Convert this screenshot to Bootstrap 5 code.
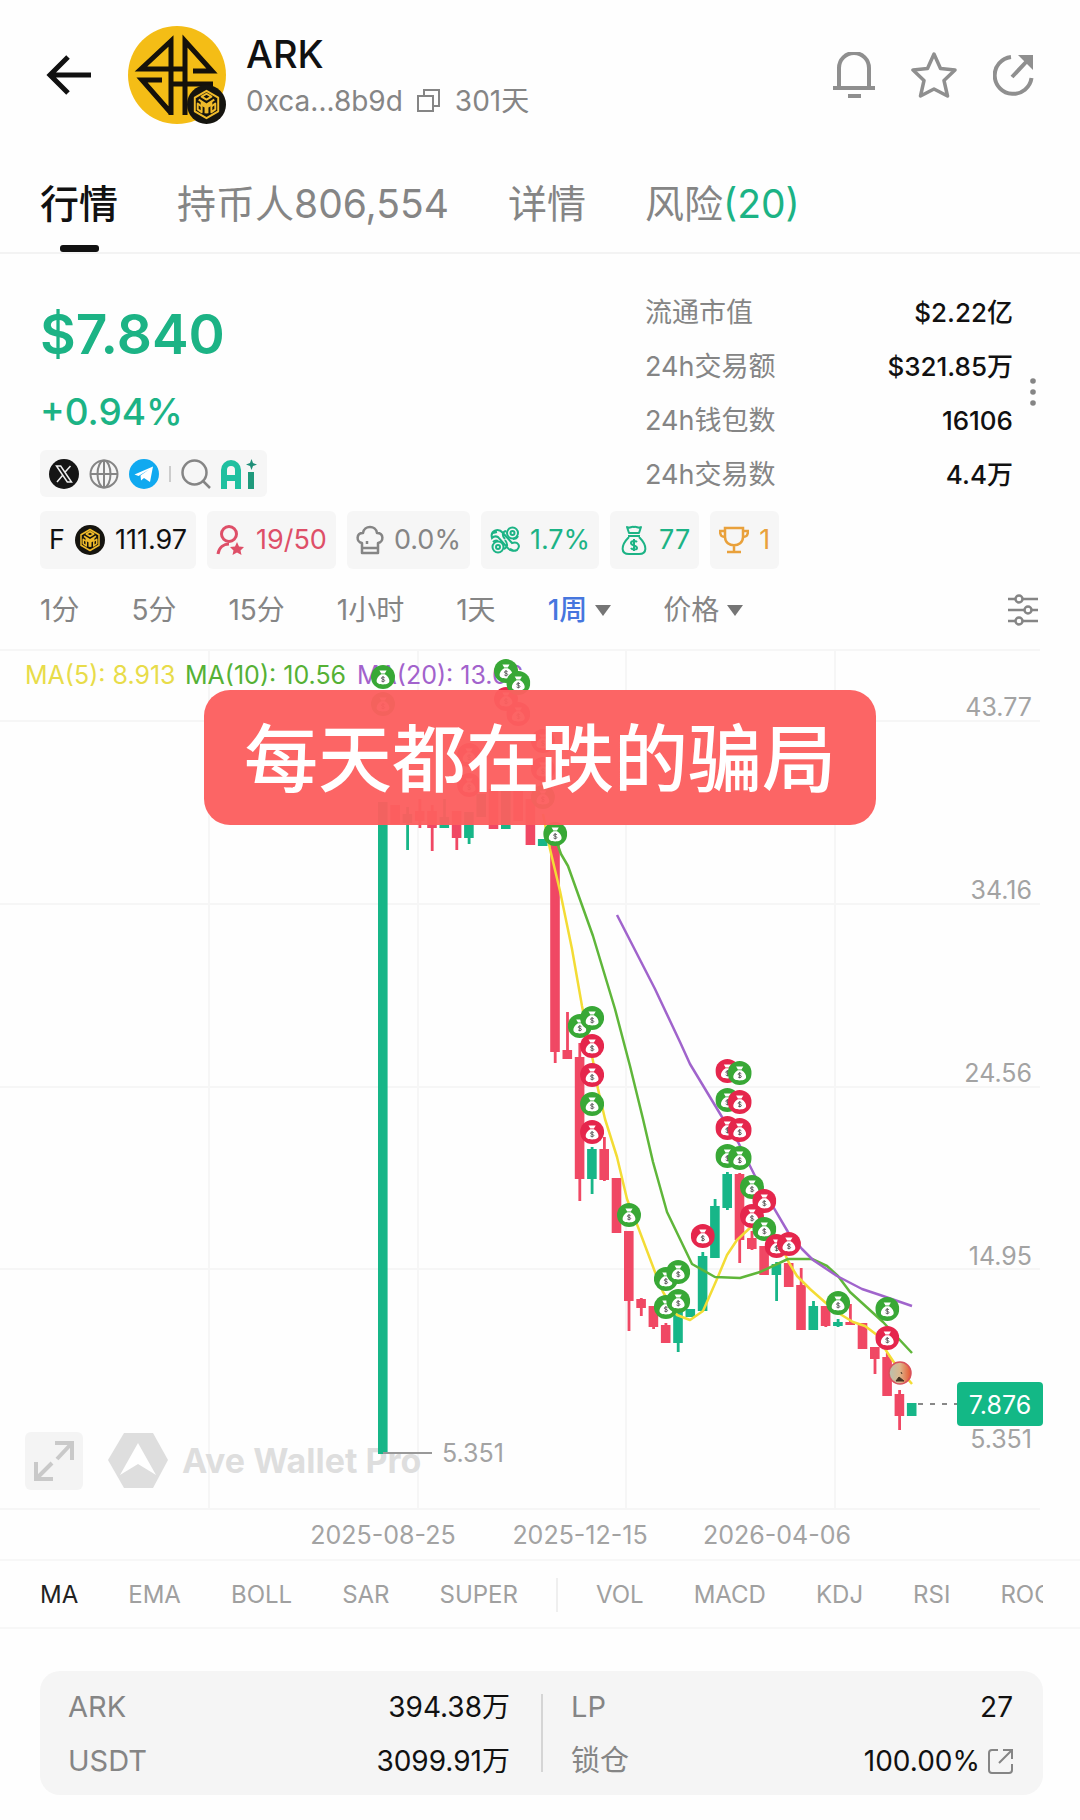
<!DOCTYPE html>
<html lang="zh-CN">
<head>
<meta charset="utf-8">
<meta name="viewport" content="width=device-width, initial-scale=1">
<title>ARK</title>
<link href="https://cdn.jsdelivr.net/npm/bootstrap@5.3.0/dist/css/bootstrap.min.css" rel="stylesheet">
<style>
  :root { --up: #1cb385; --ink: #111; --dim: #858585; --soft: #f6f6f6; --edge: 40px; }
  body { font-family: Inter, "Noto Sans CJK SC", sans-serif; background: #fefefe; color: var(--ink); font-size: 27px; line-height: 54px; }
  a { color: inherit; text-decoration: none; }
  svg { display: block; flex: none; }
  .ic { fill: none; stroke: currentColor; }
  .plain { border: 0; background: none; padding: 0; color: inherit; }
  .dim { color: var(--dim); }
  .up { color: var(--up); }
  .gutter { padding-left: var(--edge); padding-right: 37px; }

  .top-bar { padding-top: 26px; padding-bottom: 26px; padding-left: 46px; }
  .coin-logo { margin-left: 36px; }
  .coin-name { font-size: 38px; font-weight: 500; line-height: 48px; margin: 0; }
  .coin-meta { font-size: 28px; line-height: 50px; height: 46px; gap: 14px; }
  .coin-text { padding: 4px 0 0 18px; }
  .top-actions { gap: 36px; color: #8f8f8f; }

  .main-tabs { gap: 59px; border-bottom: 2px solid #f3f3f3; font-size: 39px; line-height: 48px; }
  .main-tabs a { padding-top: 30px; color: var(--dim); }
  .main-tabs a::after { content: ""; display: block; width: 39px; height: 7px; margin: 17px auto 0; border-radius: 3px; }
  .main-tabs a.active { color: var(--ink); font-weight: 500; }
  .main-tabs a.active::after { background: var(--ink); }

  .summary { padding-top: 32px; }
  .price { font-size: 55px; font-weight: 600; line-height: 70px; padding-top: 13px; }
  .change { font-size: 37px; font-weight: 500; line-height: 50px; margin-top: 18px; }
  .social { background: var(--soft); border-radius: 6px; height: 47px; padding: 0 10px 0 9px; margin-top: 13px; gap: 10px; }
  .stats { width: 368px; margin: 0; }
  .stats dt { font-weight: 400; color: var(--dim); }
  .stats dd { font-size: 26px; font-weight: 500; margin: 0; }
  .more { width: 30px; padding-left: 14px; padding-bottom: 4px; }

  .chips { gap: 11px; margin-top: 9px; }
  .chip { background: var(--soft); border-radius: 6px; height: 58px; padding: 0 9px; gap: 10px; white-space: nowrap; }
  .pink { color: #de4f68; }
  .gold { color: #e9a13b; }

  .frames { gap: 52px; font-size: 28px; line-height: 42px; height: 42px; margin-top: 20px; margin-bottom: 18px; color: var(--dim); }
  .frames .active { color: #4676de; font-weight: 500; }
  .caret { width: 0; border: 8px solid transparent; border-top: 11px solid #757575; border-bottom: 0; }

  .chart svg.plot { width: 100%; height: auto; font-size: 25px; }
  .axis { fill: #a3a3a3; }
  .banner { top: 41px; width: 672px; max-width: 90%; height: 135px; line-height: 139px; border-radius: 26px; background: #fc5f5ff5; color: #fff; font-size: 74px; font-weight: 500; white-space: nowrap; overflow: hidden; }
  .expand { left: 25px; bottom: 71px; width: 58px; height: 58px; border-radius: 6px; background: #f4f4f4; color: #c9c9c9; padding: 8px; }

  .indicators { margin-left: var(--edge); margin-right: 37px; gap: 50px; overflow: hidden; font-size: 24px; line-height: 68px; height: 68px; color: #a0a0a0; white-space: nowrap; }
  .indicators .active { color: #222; }
  .split { width: 2px; height: 34px; background: #efefef; margin: 0 -12px; flex: none; }
  .rule { border-top: 2px solid #f7f7f7; margin-top: -2px; }
  .pool { background: #f5f5f5; border-radius: 20px; margin: 42px 37px 24px var(--edge); padding: 9px 30px 7px 28px; font-size: 28px; }
  .pool .dim { font-size: 29px; }
  .pool .half { flex: 1 1 0; }
  .bar { width: 2px; background: #d5d5d5; margin: 14px 28px 16px 31px; }
</style>
</head>
<body>

<svg width="0" height="0" class="position-absolute" aria-hidden="true">
  <symbol id="bnb" viewBox="0 0 40 40">
    <circle cx="20" cy="20" r="20" fill="#15140f"/>
    <path d="M20 6l12 7v14l-12 7-12-7V13zM12 15l8 5 8-5M20 20v9M15 12l5-3 5 3-5 3zM11 19v6l4 3v-6zM29 19v6l-4 3v-6z" fill="none" stroke="#f0bb2a" stroke-width="2" stroke-linejoin="round"/>
    <path d="M14 16l6 4 6-4v5l-4 2v6h-4v-6l-4-2z" fill="#f0bb2a"/>
  </symbol>
  <symbol id="bag" viewBox="-12 -12 24 24">
    <circle r="12" fill="currentColor"/>
    <path d="M-3.6-6.6h7.2l-1.8 3h-3.6zM-1.8-2.8h3.6C5-1 6.4 1.6 6.4 3.8 6.4 6.6 4 7.4 0 7.4S-6.400 6.6-6.400 3.800C-6.400 1.600-5-1-1.800-2.800z" fill="#fff"/>
    <path d="M1.700.8C.8-.2-1.600-.2-1.600 1.200c0 1.500 3.300.7 3.300 2.300 0 1.400-2.500 1.500-3.400.4M0-.9v6.200" fill="none" stroke="#555" stroke-width=".9"/>
  </symbol>
</svg>

<header class="top-bar gutter d-flex align-items-start">
  <button class="plain align-self-center" aria-label="返回">
    <svg class="ic" width="46" height="40" viewBox="0 0 46 40" stroke-width="5"><path d="M45 20H5M22 2L4 20l18 18"/></svg>
  </button>
  <svg class="coin-logo" width="100" height="98" viewBox="0 0 100 98">
    <circle cx="49" cy="49" r="49" fill="#f4bd16"/>
    <g fill="none" stroke="#15110a" stroke-width="5">
      <path d="M43 89V15L13 43h44M57 89V15l27 30H65M34 54H14l29 33M43 58h42"/>
    </g>
    <use href="#bnb" x="59" y="59" width="39" height="39"/>
  </svg>
  <div class="coin-text">
    <h1 class="coin-name">ARK</h1>
    <div class="coin-meta dim d-flex align-items-center">
      <span>0xca...8b9d</span>
      <svg class="ic" width="24" height="24" viewBox="0 0 24 24" stroke-width="2"><path d="M1 7h15v15H1zM7 6V1h15v16h-5"/></svg>
      <span>301天</span>
    </div>
  </div>
  <div class="top-actions d-flex align-items-center align-self-center ms-auto pe-2">
    <button class="plain" aria-label="提醒"><svg class="ic" width="42" height="46" viewBox="0 0 42 46" stroke-width="4"><path d="M6 36V16a15 15 0 0 1 30 0v20M0 36h42M15 44h13"/></svg></button>
    <button class="plain" aria-label="收藏"><svg class="ic" width="46" height="46" viewBox="0 0 46 46" stroke-width="3.500" stroke-linejoin="round"><path d="M23 2l6.500 14.500L44 18 33 28.500 36.500 44 23 37 9.500 44 13 28.500 2 18l14.500-1.500z"/></svg></button>
    <button class="plain" aria-label="分享"><svg class="ic" width="42" height="42" viewBox="0 0 42 42" stroke-width="4"><path d="M18 3a18.500 18.500 0 1 0 20.500 21M19 23L35 6"/><path d="M25 1h15v15z" fill="currentColor" stroke="none"/></svg></button>
  </div>
</header>

<nav class="main-tabs gutter d-flex">
  <a href="#" class="active">行情</a>
  <a href="#">持币人806,554</a>
  <a href="#">详情</a>
  <a href="#">风险<span class="up">(20)</span></a>
</nav>

<main>
  <section class="summary gutter d-flex justify-content-between">
    <div class="d-flex flex-column align-items-start">
      <div class="price up">$7.840</div>
      <div class="change up">+0.94%</div>
      <div class="social d-flex align-items-center dim">
        <a href="#" aria-label="X"><svg width="30" height="30" viewBox="0 0 30 30"><circle cx="15" cy="15" r="15" fill="#151515"/><path d="M7.500 7h4.200L22.500 23h-4.200zM21.500 7l-6 6.700M13.700 16.300L8 23" fill="none" stroke="#eee" stroke-width="1.500"/></svg></a>
        <a href="#" aria-label="网站"><svg class="ic" width="30" height="30" viewBox="0 0 30 30" stroke-width="2"><circle cx="15" cy="15" r="13.500"/><ellipse cx="15" cy="15" rx="6.500" ry="13.500"/><path d="M1.500 15h27M15 1.500v27"/></svg></a>
        <a href="#" aria-label="Telegram"><svg width="30" height="30" viewBox="0 0 30 30"><circle cx="15" cy="15" r="15" fill="#10a9f0"/><path d="M5.500 15.500L24 7.500l-3 15.500-6-4-3 2.500-.500-5L20 10.500 9.500 17z" fill="#fff"/></svg></a>
        <svg width="2" height="16"><path d="M1 0v16" stroke="#ccc" stroke-width="2"/></svg>
        <a href="#" aria-label="搜索"><svg class="ic" width="30" height="30" viewBox="0 0 30 30" stroke-width="2.500"><circle cx="13.500" cy="13.500" r="12"/><path d="M22 22l7 7"/></svg></a>
        <a href="#" aria-label="Ai"><svg width="36" height="30" viewBox="0 0 36 30"><g fill="none" stroke="#1fc0a0" stroke-width="6"><path d="M3 30V11a7 7 0 0 1 14 0v19M3 19h14"/><path d="M30 13v17" stroke="#1f9a7c"/></g><path d="M30.500 0l1.500 4 4 1.500-4 1.500-1.500 4-1.500-4-4-1.500 4-1.500z" fill="#1f8f78"/></svg></a>
      </div>
    </div>
    <div class="d-flex">
      <dl class="stats">
        <div class="d-flex justify-content-between"><dt>流通市值</dt><dd>$2.22亿</dd></div>
        <div class="d-flex justify-content-between"><dt>24h交易额</dt><dd>$321.85万</dd></div>
        <div class="d-flex justify-content-between"><dt>24h钱包数</dt><dd>16106</dd></div>
        <div class="d-flex justify-content-between"><dt>24h交易数</dt><dd>4.4万</dd></div>
      </dl>
      <button class="plain more dim" aria-label="更多"><svg width="12" height="28" viewBox="0 0 12 28" fill="currentColor"><circle cx="6" cy="3" r="2.800"/><circle cx="6" cy="14" r="2.800"/><circle cx="6" cy="25" r="2.800"/></svg></button>
    </div>
  </section>

  <section class="chips gutter d-flex">
    <div class="chip d-flex align-items-center"><span>F</span><svg width="30" height="30"><use href="#bnb" width="30" height="30"/></svg><span>111.97</span></div>
    <div class="chip pink d-flex align-items-center"><svg class="ic" width="30" height="30" viewBox="0 0 30 30" stroke-width="3"><circle cx="13" cy="9" r="7.500"/><path d="M2 29c1-7 6-10 11-10"/><path d="M21 17l2 4.500 5 .500-3.500 3.500 1 4.500-4.500-2.500-4.500 2.500 1-4.500L14 22l5-.500z" fill="currentColor" stroke="none"/></svg><span>19/50</span></div>
    <div class="chip dim d-flex align-items-center"><svg class="ic" width="28" height="30" viewBox="0 0 28 30" stroke-width="2.500" stroke-linejoin="round"><path d="M6 18C0 17 0 8 7 8c1-8 13-8 14 0 7 0 7 9 1 10v10H6zM6 23h16M11 16v3"/></svg><span>0.0%</span></div>
    <div class="chip up d-flex align-items-center"><svg class="ic" width="30" height="30" viewBox="0 0 30 30" stroke-width="2"><circle cx="22.500" cy="8" r="5.500"/><circle cx="22.500" cy="8" r="2"/><circle cx="8" cy="22" r="5.500"/><circle cx="8" cy="22" r="2"/><path d="M2 13C0 6 8 2 13 8l9 10c6-2 9 3 5 7-4 2-8 0-10-3L8 12c-2-1-4-1-6 1zM16 6c-4 1-4 5-1 8M14 24c4-2 4-5 1-9M3 8l4-1M24 26l-4-2M3 17c1-1 3-2 5-1M23 14c2 0 4-1 5-3"/></svg><span>1.7%</span></div>
    <div class="chip up d-flex align-items-center"><svg class="ic" width="30" height="30" viewBox="0 0 30 30" stroke-width="2" stroke-linejoin="round"><path d="M10 8L8 2c3 2 4-1 7 0 3-1 4 2 7 0l-2 6zM9 11h12M10 12c-9 9-8 17 0 17h10c8 0 9-8 0-17M18 17c-2-2-6-1-6 1 0 3 6 2 6 5 0 2-5 2-6 0M15 14v12"/></svg><span>77</span></div>
    <div class="chip gold d-flex align-items-center"><svg class="ic" width="30" height="28" viewBox="0 0 30 28" stroke-width="2.500"><path d="M6 2h18v9c0 11-18 11-18 0zM15 19v7M8 26h14M6 5H1c0 5 2 6 5 6M24 5h5c0 5-2 6-5 6"/></svg><span>1</span></div>
  </section>

  <nav class="frames gutter d-flex align-items-center">
    <button class="plain">1分</button>
    <button class="plain">5分</button>
    <button class="plain">15分</button>
    <button class="plain">1小时</button>
    <button class="plain">1天</button>
    <button class="plain active d-flex align-items-center gap-2">1周<span class="caret"></span></button>
    <button class="plain d-flex align-items-center gap-2">价格<span class="caret"></span></button>
    <button class="plain ms-auto" aria-label="设置"><svg class="ic" width="36" height="32" viewBox="0 0 36 32" stroke-width="2.500"><path d="M1 5h8M16 5h15M1 16h17M25 16h6M1 27h8M16 27h15"/><circle cx="12" cy="5" r="3.500"/><circle cx="21" cy="16" r="3.500"/><circle cx="12" cy="27" r="3.500"/></svg></button>
  </nav>

  <section class="chart position-relative">
    <svg class="plot" viewBox="0 650 1080 912" role="img" aria-label="ARK 周线">
      <path d="M0 651h1040M0 722h1040M0 905h1040M0 1088h1040M0 1270h1040M0 1510h1040M209 651v859M418 651v859M626 651v859M835 651v859" stroke="#f6f6f6" stroke-width="2" fill="none"/>
      <g fill="#dedede">
        <path d="M124 1434h29l15 27-15 28h-29l-16-28z"/>
        <path d="M138 1444l18 32-18-11-18 11z" fill="#fff"/>
        <text x="182" y="1474" font-size="34" font-weight="700">Ave Wallet Pro</text>
      </g>
      <text x="25" y="685" fill="#e8dc4a">MA(5): 8.913</text>
      <text x="185" y="685" fill="#55b135">MA(10): 10.56</text>
      <text x="357" y="685" fill="#a262cc">MA(20): 13.06</text>
      <g id="candles"></g>
      <path d="M383 1454h49" stroke="#999" stroke-width="2"/>
      <text class="axis" x="442" y="1463">5.351</text>
      <g fill="none" stroke-width="2.500" stroke-linejoin="round">
        <path stroke="#f3dc35" d="M543 815L550 850 560 892 572 950 582 1007 593 1062 598 1090 605 1120 617 1158 627 1200 638 1228 655 1273 663 1293 677 1316 690 1321 703 1312 717 1280 727 1256 737 1241 752 1227 777 1237 788 1262 797 1277 810 1290 827 1305 840 1315 853 1323 865 1327 877 1336 887 1353 893 1362 912 1385"/>
        <path stroke="#5fb63a" d="M552 830L561 855 568 867 593 937 615 1010 630 1067 643 1120 653 1163 667 1213 692 1265 715 1278 740 1279 760 1273 788 1260 812 1260 827 1267 838 1277 850 1293 883 1323 912 1354"/>
        <path stroke="#a064cc" d="M617 916L655 990 680 1043 690 1065 722 1118 738 1143 755 1177 788 1233 802 1250 813 1261 837 1277 862 1290 880 1296 912 1307"/>
      </g>
      <path d="M918 1405h40" stroke="#888" stroke-width="2" stroke-dasharray="5 7"/>
      <g id="markers"></g>
      <defs><linearGradient id="face"><stop offset="0" stop-color="#b9c0ae"/><stop offset=".5" stop-color="#dcb68c"/><stop offset="1" stop-color="#e8552f"/></linearGradient></defs>
      <circle cx="900" cy="1374" r="11" fill="url(#face)" stroke="#d9515c" stroke-width="1.500"/>
      <path d="M896 1382l3-4 5 4zM901 1373l1 2" stroke="#432" fill="#432"/>
      <g class="axis" text-anchor="end">
        <text x="1032" y="717">43.77</text>
        <text x="1032" y="900">34.16</text>
        <text x="1032" y="1083">24.56</text>
        <text x="1032" y="1266">14.95</text>
        <text x="1032" y="1449">5.351</text>
      </g>
      <rect x="957" y="1383" width="86" height="44" rx="4" fill="#13b886"/>
      <text x="1000" y="1415" text-anchor="middle" fill="#fff">7.876</text>
      <g class="axis" text-anchor="middle">
        <text x="383" y="1545">2025-08-25</text>
        <text x="580" y="1545">2025-12-15</text>
        <text x="777" y="1545">2026-04-06</text>
      </g>
    </svg>
    <div class="banner position-absolute start-50 translate-middle-x text-center">每天都在跌的骗局</div>
    <button class="plain expand position-absolute" aria-label="全屏"><svg class="ic" width="42" height="42" viewBox="0 0 42 42" stroke-width="4"><path d="M22 3h17v17M39 3L24 19M3 22v17h17M3 39l16-16"/></svg></button>
  </section>

  <div class="rule"></div>
  <nav class="indicators d-flex align-items-center">
    <a href="#" class="active">MA</a><a href="#">EMA</a><a href="#">BOLL</a><a href="#">SAR</a><a href="#">SUPER</a>
    <span class="split"></span>
    <a href="#">VOL</a><a href="#">MACD</a><a href="#">KDJ</a><a href="#">RSI</a><a href="#">ROC</a>
  </nav>
  <div class="rule"></div>

  <section class="pool d-flex">
    <div class="half">
      <div class="d-flex justify-content-between"><span class="dim">ARK</span><span>394.38万</span></div>
      <div class="d-flex justify-content-between"><span class="dim">USDT</span><span>3099.91万</span></div>
    </div>
    <div class="bar"></div>
    <div class="half">
      <div class="d-flex justify-content-between"><span class="dim">LP</span><span>27</span></div>
      <div class="d-flex justify-content-between"><span class="dim">锁仓</span><a href="#" class="d-flex align-items-center gap-2">100.00%<svg class="ic dim" width="25" height="25" viewBox="0 0 25 25" stroke-width="2"><path d="M10 1H4a3 3 0 0 0-3 3v17a3 3 0 0 0 3 3h17a3 3 0 0 0 3-3v-6M11 14L24 1M15 1h9v9"/></svg></a></div>
    </div>
  </section>
</main>

<script src="https://cdn.jsdelivr.net/npm/bootstrap@5.3.0/dist/js/bootstrap.bundle.min.js"></script>
<script>
  const NS = "http://www.w3.org/2000/svg";
  const add = (parent, tag, attrs) => {
    const el = document.createElementNS(NS, tag);
    for (const k in attrs) el.setAttribute(k, attrs[k]);
    parent.appendChild(el);
  };
  // weekly candles: direction, body top, body bottom, high, low
  const weeks = [
    ["u",803,1455],["d",806,825],["u",815,824,808,851],["d",812,822,800,829],["d",812,829,806,852],["u",818,829,800,829],
    ["d",812,839,812,851],["u",813,839,813,845],["u",795,818],["d",790,830],["u",785,830],["d",790,822],["d",800,846],
    ["u",840,847],["d",840,1053,840,1064],["d",1051,1060,1013,1060],["d",1058,1180,1044,1202],["u",1150,1180,1148,1195],
    ["d",1150,1181,1138,1182],["d",1179,1234],["d",1232,1302,1232,1332],["d",1300,1309,1299,1317],["d",1307,1328,1307,1330],
    ["d",1326,1344,1324,1344],["u",1312,1344,1312,1353],["u",1310,1318],["u",1257,1312,1253,1312],["u",1207,1259,1200,1259],
    ["u",1175,1209,1173,1211],["d",1175,1241,1174,1264],["d",1239,1250,1232,1251],["d",1247,1276],["u",1265,1276,1263,1302],
    ["d",1264,1288],["d",1286,1331,1269,1331],["u",1307,1331,1302,1331],["d",1307,1327,1307,1328],["u",1323,1327,1320,1328],
    ["d",1323,1326,1305,1326],["d",1324,1350],["d",1348,1360,1348,1375],["d",1358,1397,1354,1397],["d",1395,1417,1391,1431],["u",1404,1417]
  ];
  const candles = document.getElementById("candles");
  const at = i => 383 + i * 12.3;
  weeks.forEach(([dir, top, bottom, high = top, low = bottom], i) => {
    const fill = dir === "u" ? "#17b688" : "#f04864";
    add(candles, "rect", { x: at(i) - 5, y: top, width: 9.6, height: bottom - top, fill });
    add(candles, "rect", { x: at(i) - 1.4, y: high, width: 2.8, height: low - high, fill });
  });
  // trade markers: side (b buy, s sell), week index, y
  const trades = [
    ["b",0,678],["b",0,705],["b",10,672],["s",10,700],["b",11,684],["s",11,715],["s",7,756],["s",7,786],["s",13,742],["s",13,770],["b",13,798],
    ["b",14,835],["b",16,1027],["b",17,1019],["s",17,1047],["s",17,1076],["b",17,1105],["s",17,1133],
    ["b",20,1216],["b",23,1280],["b",24,1273],["b",23,1308],["b",24,1302],["s",26,1237],
    ["s",28,1072],["b",29,1074],["b",28,1101],["s",29,1103],["s",28,1129],["s",29,1131],["b",28,1157],["b",29,1159],
    ["b",30,1188],["s",31,1202],["s",30,1217],["b",31,1230],["s",32,1247],["s",33,1245],["b",37,1304],["b",41,1310],["s",41,1339]
  ];
  const markers = document.getElementById("markers");
  trades.forEach(([side, week, y]) =>
    add(markers, "use", { href: "#bag", x: at(week) - 12, y: y - 12, width: 24, height: 24, color: side === "b" ? "#38a836" : "#e5264c" }));
</script>
</body>
</html>
